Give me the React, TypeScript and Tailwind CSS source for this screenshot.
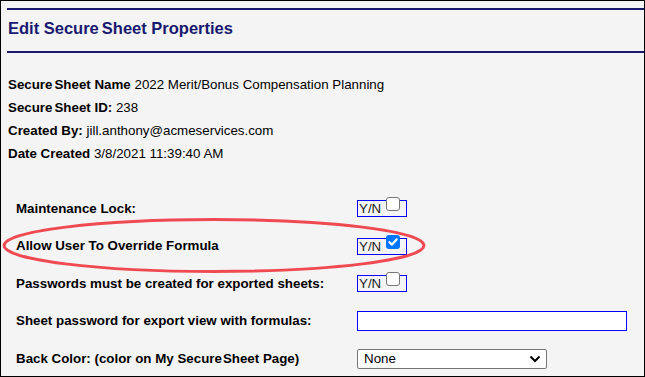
import React from "react";

function SS() {
  return (
    <>
      Secure<span className="ml-[2px]">Sheet</span>
    </>
  );
}

function YN({ checked = false }: { checked?: boolean }) {
  return (
    <div className="relative w-[50px] h-[17px] border border-[#0000ff] text-[13.33px] leading-[15px] pl-[1px] text-[#222]">
      Y/N
      <span className="absolute left-[28px] -top-[4px]">
        {checked ? (
          <span className="flex w-[14px] h-[14px] rounded-[3px] bg-[#0075ff] items-center justify-center">
            <svg width="10" height="10" viewBox="0 0 10 10">
              <path d="M1.5 5.2 L4 7.6 L8.6 2.4" stroke="white" strokeWidth="2.2" fill="none" strokeLinecap="round" strokeLinejoin="round" />
            </svg>
          </span>
        ) : (
          <span className="block w-[14px] h-[14px] rounded-[3px] border border-[#767676] bg-white" />
        )}
      </span>
    </div>
  );
}

export default function App() {
  return (
    <div className="relative w-[645px] h-[377px] overflow-hidden bg-[#f4f4f4] border border-black font-['Liberation_Sans',Arial,sans-serif] text-black">
      <div className="ml-[6px] mt-[7px] border-t-2 border-[#191970]" />
      <div className="pl-[7px] pt-[9px] pb-[14px] text-[16.5px] leading-[18px] font-bold text-[#191970]">
        Edit Secure<span className="ml-[3px]">Sheet</span> Properties
      </div>
      <div className="ml-[6px] border-t-2 border-[#191970]" />

      <div className="pl-[7px] pt-[20px] text-[13.33px] leading-[23px]">
        <div>
          <b><SS /> Name</b> 2022 Merit/Bonus Compensation Planning
        </div>
        <div>
          <b><SS /> ID:</b> 238
        </div>
        <div>
          <b>Created By:</b> jill.anthony@acmeservices.com
        </div>
        <div>
          <b>Date Created</b> 3/8/2021 11:39:40 AM
        </div>
      </div>

      <div className="mt-[25px] pl-[15px] text-[13.33px] font-bold grid grid-cols-[341px_1fr] auto-rows-[37.5px] items-center">
        <div>Maintenance Lock:</div>
        <div className="font-normal"><YN /></div>
        <div>Allow User To Override Formula</div>
        <div className="font-normal"><YN checked /></div>
        <div>Passwords must be created for exported sheets:</div>
        <div className="font-normal"><YN /></div>
        <div>Sheet password for export view with formulas:</div>
        <div className="font-normal">
          <div className="w-[270px] h-[20px] border border-[#0000ff] bg-white" />
        </div>
        <div>Back Color: (color on My Secure<span className="ml-[1px]">Sheet</span> Page)</div>
        <div className="font-normal">
          <div className="w-[190px] h-[20px] border border-[#767676] rounded-[2px] bg-white flex items-center justify-between pl-[6px] pr-[5px] text-[13.33px]">
            <span>None</span>
            <svg width="12" height="8" viewBox="0 0 12 8">
              <path d="M1.5 1.5 L6 6 L10.5 1.5" stroke="black" strokeWidth="2" fill="none" />
            </svg>
          </div>
        </div>
      </div>

      <svg className="absolute left-0 top-0 pointer-events-none" width="645" height="377">
        <ellipse cx="213" cy="244.5" rx="210" ry="26" fill="none" stroke="#ef4a52" strokeWidth="3" />
      </svg>
    </div>
  );
}
